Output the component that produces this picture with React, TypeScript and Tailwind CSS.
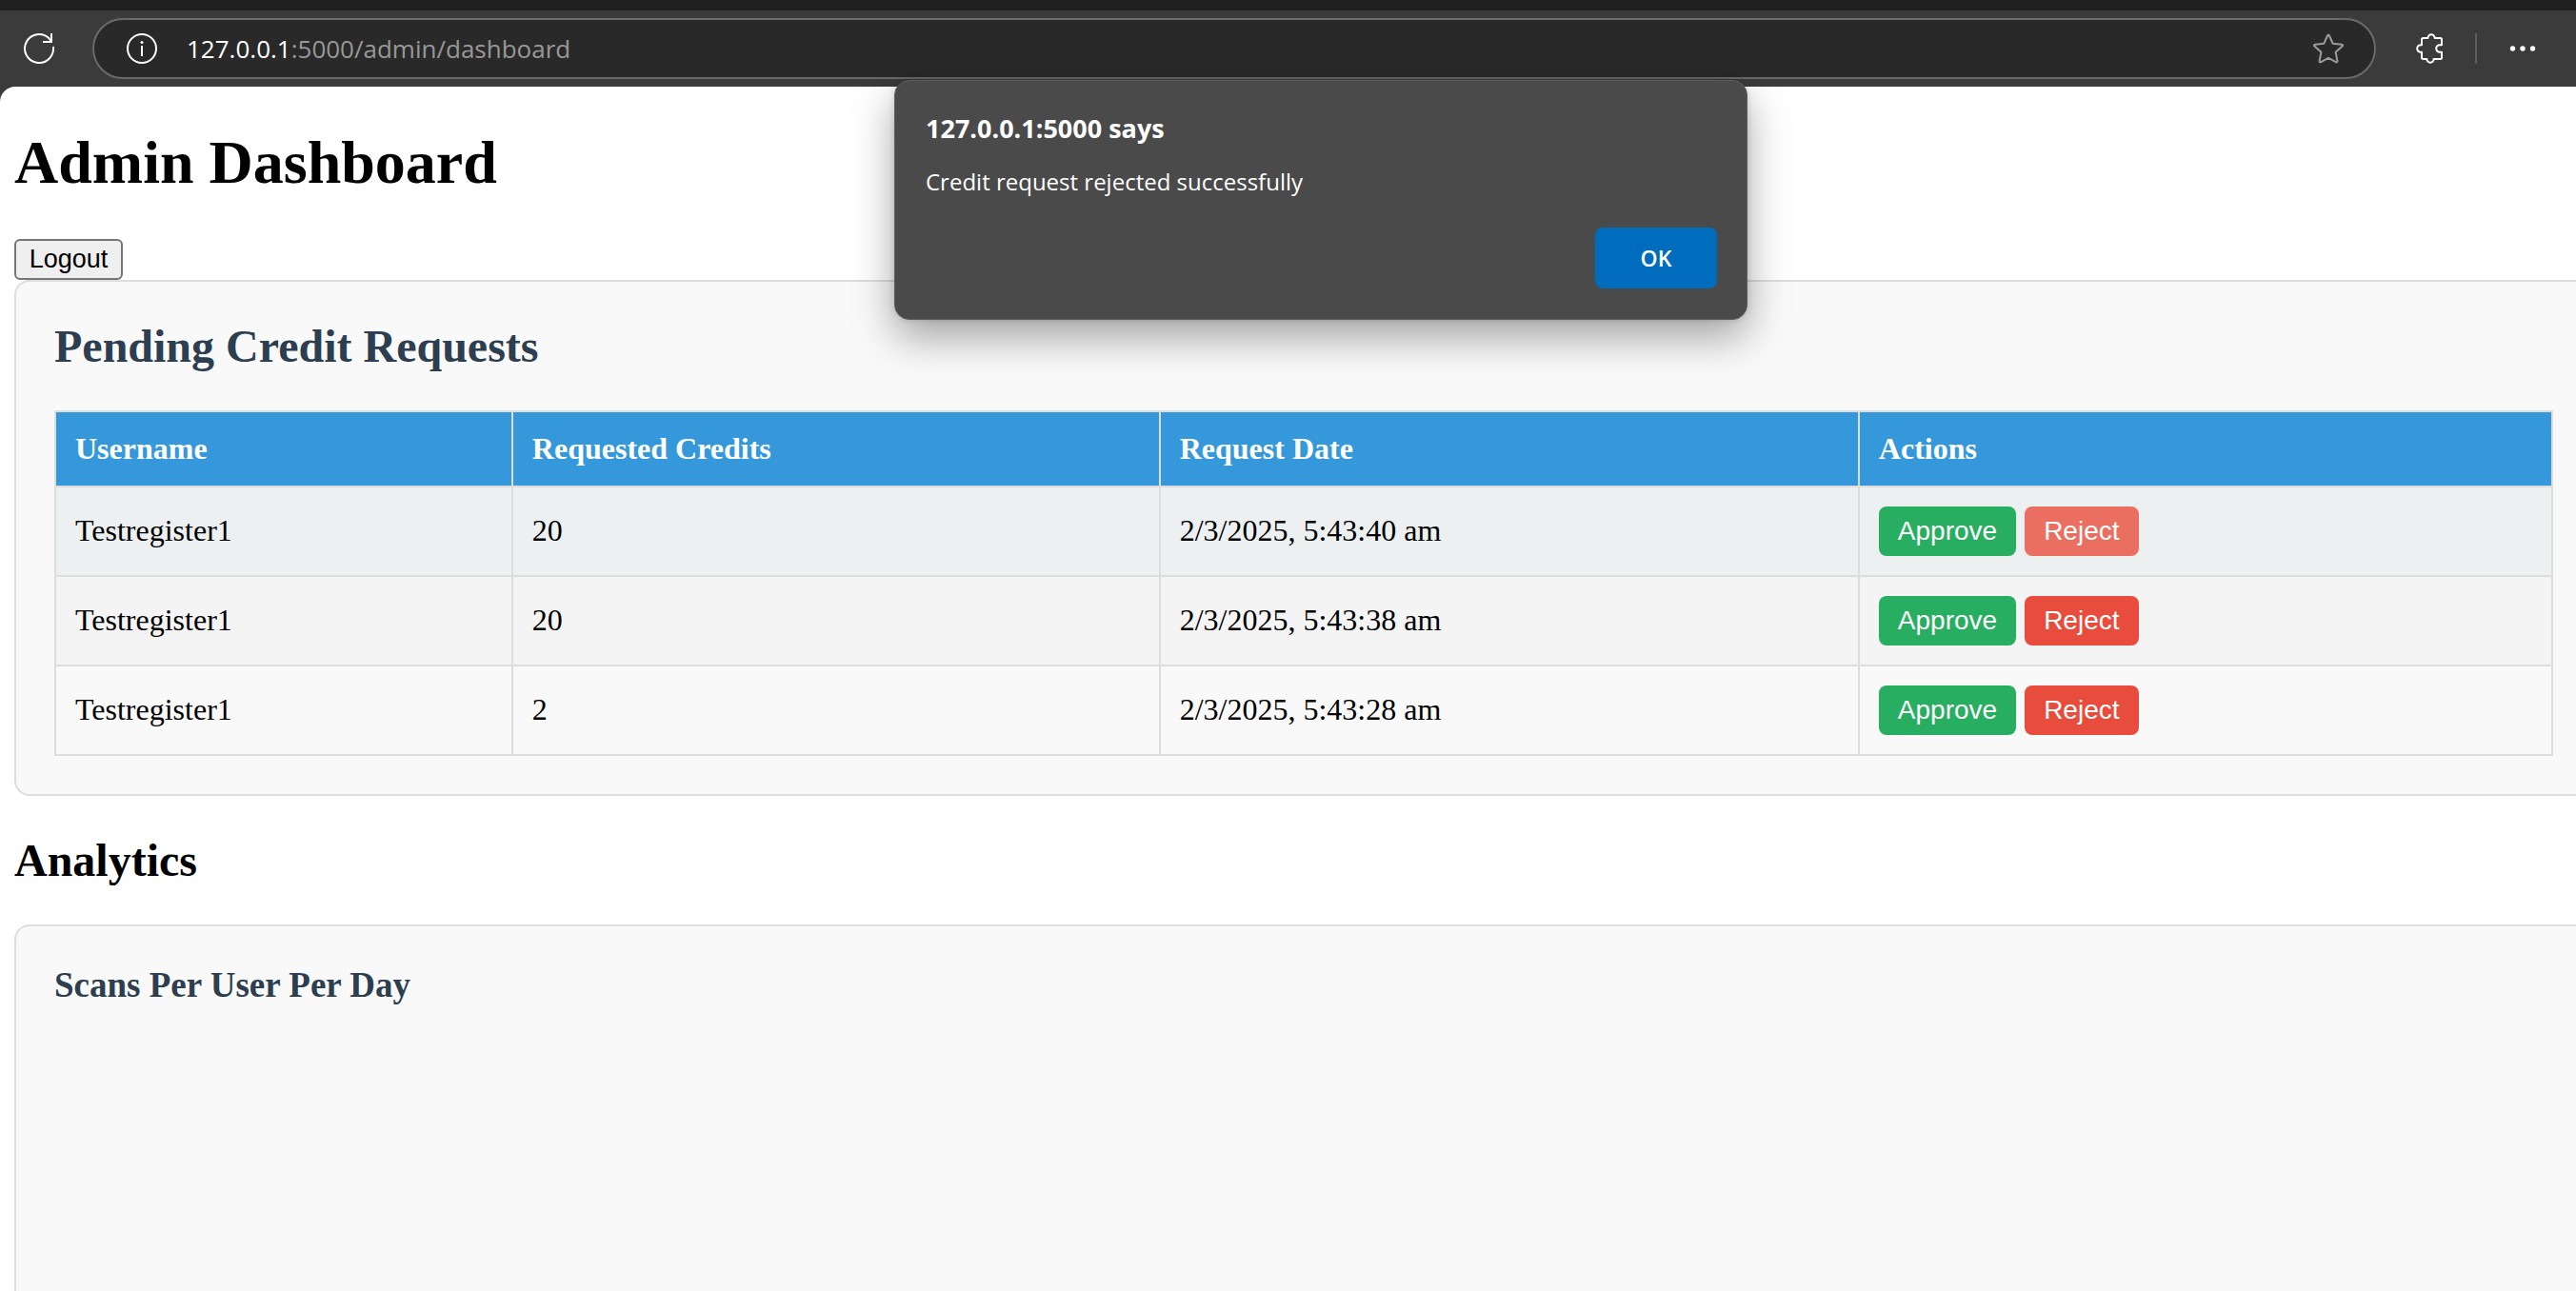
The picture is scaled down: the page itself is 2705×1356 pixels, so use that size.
const requests = [
  { user: "Testregister1", credits: 20, date: "2/3/2025, 5:43:40 am", row: "bg-[#ecf0f1]", reject: "bg-[#ea6f61]" },
  { user: "Testregister1", credits: 20, date: "2/3/2025, 5:43:38 am", row: "bg-[#f4f4f4]", reject: "bg-[#e74c3c]" },
  { user: "Testregister1", credits: 2, date: "2/3/2025, 5:43:28 am", row: "bg-[#f9f9f9]", reject: "bg-[#e74c3c]" },
];

const columns = [
  { name: "Username", width: "w-[18.3%]" },
  { name: "Requested Credits", width: "w-[25.93%]" },
  { name: "Request Date", width: "w-[28%]" },
  { name: "Actions", width: "" },
];

function Toolbar() {
  return (
    <header className="flex h-[91px] items-center border-t-[11px] border-[#202020] bg-[#3b3b3b]">
      <button aria-label="Refresh" className="ml-6 text-white">
        <svg className="size-[34px]" viewBox="0 0 34 34" fill="none" stroke="currentColor" strokeWidth="2">
          <path d="M31.900 15A15 15 0 1 1 27.500 6.300L30 9.500" />
          <path d="M30 1v9H21" />
        </svg>
      </button>
      <div className="ml-[39px] flex h-16 flex-1 items-center rounded-full border-2 border-[#6a6a6a] bg-[#292929] font-['Open_Sans',sans-serif] text-[26px]">
        <button aria-label="Site information" className="ml-[33px] text-white">
          <svg className="size-[34px]" viewBox="0 0 34 34" fill="none" stroke="currentColor" strokeWidth="2">
            <circle cx="17" cy="17" r="15" />
            <path d="M17 14V25" />
            <circle cx="17" cy="10.500" r="1.500" fill="currentColor" stroke="none" />
          </svg>
        </button>
        <label htmlFor="address" className="ml-[30px] text-white">127.0.0.1</label>
        <input id="address" className="min-w-0 flex-1 text-[#989898] outline-none" defaultValue=":5000/admin/dashboard" />
        <button aria-label="Add to favourites" className="mr-[31px] text-[#9c9c9c]">
          <svg className="size-[34px]" viewBox="0 0 34 34" fill="none" stroke="currentColor" strokeWidth="2" strokeLinejoin="round">
            <path d="M16 3.500q1-2 2 0L21.600 11.700l9.400 1.100q1.800.4.600 1.800L24.600 20.800l1.800 9.200q.1 1.900-1.600 1.200L17 26.800l-7.800 4.400q-1.700.7-1.600-1.200l1.800-9.200L2.400 14.600q-1.200-1.400.6-1.800l9.400-1.100z" />
          </svg>
        </button>
      </div>
      <button aria-label="Extensions" className="ml-[41px] text-white">
        <svg className="size-8" viewBox="0 0 32 32" fill="none" stroke="currentColor" strokeWidth="2" strokeLinejoin="round">
          <path d="M7 6.500Q7 5 8.500 5H13.500a3.600 3.800 0 0 1 7.200 0H26.500Q28 5 28 6.500V12.200H26a3.800 3.800 0 0 0 0 7.600h2V25.500q0 1.500-1.500 1.500H19.600a3.600 3.800 0 0 1-7.200 0H8.500Q7 27 7 25.500V19.800H6a3.800 3.800 0 0 1 0-7.600h1z" />
        </svg>
      </button>
      <div className="ml-[31px] h-8 w-0.5 bg-[#5c5c5c]" />
      <button aria-label="Settings and more" className="mr-[42px] ml-[34px] text-white">
        <svg className="size-7" viewBox="0 0 28 28" fill="currentColor">
          <circle cx="3.500" cy="14" r="2.700" />
          <circle cx="14" cy="14" r="2.700" />
          <circle cx="24.500" cy="14" r="2.700" />
        </svg>
      </button>
    </header>
  );
}

function AlertDialog() {
  return (
    <div className="absolute inset-x-0 top-[84px] flex justify-center pl-[69px] font-['Open_Sans',sans-serif] text-white">
      <div
        role="alertdialog"
        aria-labelledby="alert-title"
        aria-describedby="alert-text"
        className="flex h-[252px] w-[896px] flex-col rounded-2xl border border-[#5c5c5c] bg-[#4a4a4a] p-8 pr-[31px] shadow-[0_0_6px_rgba(0,0,0,0.15),0_18px_44px_rgba(0,0,0,0.35)]"
      >
        <h2 id="alert-title" className="text-[27px] leading-9 font-bold">127.0.0.1:5000 says</h2>
        <p id="alert-text" className="mt-5 text-[24px] leading-9">Credit request rejected successfully</p>
        <button className="mt-auto h-16 w-32 self-end rounded-lg bg-[#006cbe] text-[23px] leading-8 font-semibold">OK</button>
      </div>
    </div>
  );
}

export default function App() {
  return (
    <div className="relative flex h-screen flex-col overflow-hidden bg-[#3b3b3b]">
      <Toolbar />
      <main className="flex flex-1 flex-col items-start rounded-tl-2xl bg-white pl-[15px] font-['Liberation_Serif',serif] text-[32px] text-black">
        <h1 className="my-[43px] text-[64px] leading-[74px] font-bold">Admin Dashboard</h1>
        <button className="h-[43px] w-[114px] shrink-0 rounded-md border-2 border-[#767676] bg-[#efefef] pb-0.5 font-['Liberation_Sans',sans-serif] text-[27px] leading-8">
          Logout
        </button>
        <section className="w-full rounded-l-2xl border-2 border-r-0 border-[#ddd] bg-[#f9f9f9] py-10 pr-6 pl-10">
          <h2 className="mb-10 text-[48px] leading-[55px] font-bold text-[#2c3e50]">Pending Credit Requests</h2>
          <table className="w-full table-fixed border-collapse text-left">
            <thead className="bg-[#3498db] text-white">
              <tr>
                {columns.map((c) => (
                  <th key={c.name} scope="col" className={`border-2 border-[#ddd] p-5 leading-[37px] font-bold ${c.width}`}>
                    {c.name}
                  </th>
                ))}
              </tr>
            </thead>
            <tbody className="align-top leading-[50px]">
              {requests.map((r) => (
                <tr key={r.date} className={r.row}>
                  <td className="border-2 border-[#ddd] p-5">{r.user}</td>
                  <td className="border-2 border-[#ddd] p-5">{r.credits}</td>
                  <td className="border-2 border-[#ddd] p-5">{r.date}</td>
                  <td className="border-2 border-[#ddd] p-5">
                    <div className="flex gap-[9px] font-['Liberation_Sans',sans-serif] text-[28px] leading-8 text-white">
                      <button className="rounded-lg bg-[#27ae60] px-5 py-2.5">Approve</button>
                      <button className={`rounded-lg px-5 py-2.5 ${r.reject}`}>Reject</button>
                    </div>
                  </td>
                </tr>
              ))}
            </tbody>
          </table>
        </section>
        <h2 className="my-10 text-[48px] leading-[55px] font-bold">Analytics</h2>
        <section className="w-full flex-1 rounded-tl-2xl border-2 border-r-0 border-b-0 border-[#ddd] bg-[#f9f9f9] p-10">
          <h3 className="text-[37px] leading-[43px] font-bold text-[#2c3e50]">Scans Per User Per Day</h3>
        </section>
      </main>
      <AlertDialog />
    </div>
  );
}
